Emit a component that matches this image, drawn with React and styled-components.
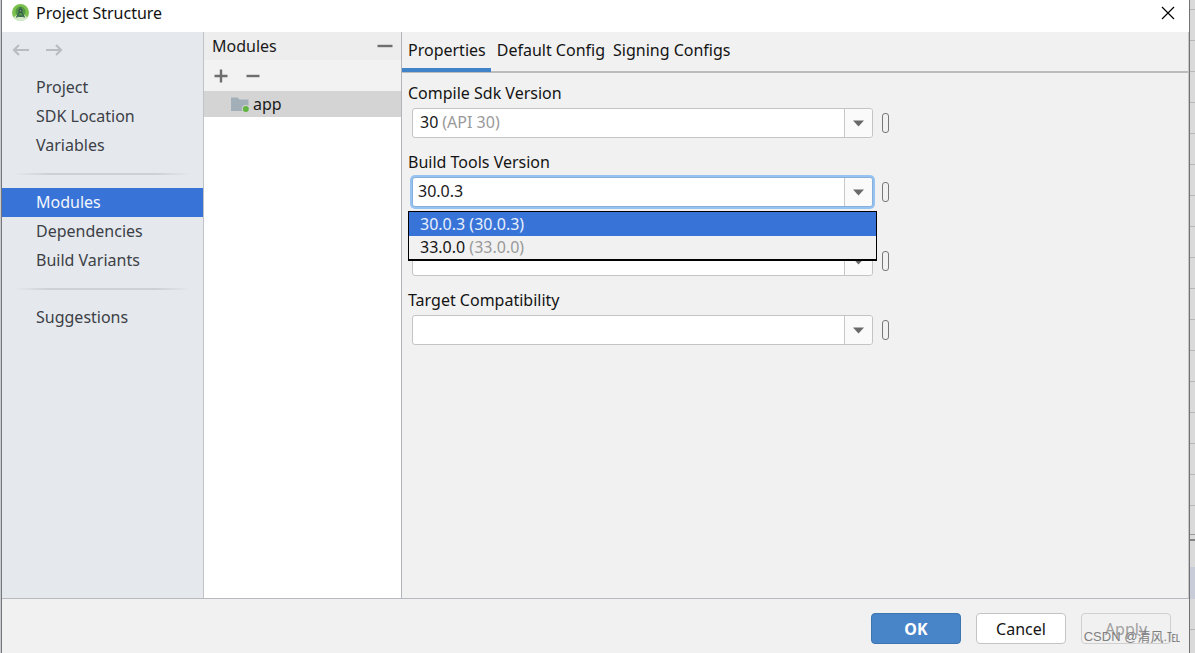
import React from "react";
import styled, { createGlobalStyle } from "styled-components";

const GlobalStyle = createGlobalStyle`
  *, *::before, *::after { box-sizing: border-box; }
  body {
    margin: 0;
    background: #dcdcdc;
    color: #1a1a1a;
    font: 16px/20px "Noto Sans", "Noto Sans CJK SC", sans-serif;
  }
  button, input { font: inherit; color: inherit; }
  button { margin: 0; padding: 0; border: 0; background: none; }
  ul { margin: 0; padding: 0; list-style: none; }
  a { color: inherit; text-decoration: none; }
`;

const Desktop = styled.div`
  display: flex;
  min-height: 100vh;
`;

const LeftEdge = styled.div`
  flex: 0 0 2px;
  background: #c9cbce;
  border-right: 1px solid #73777c;
`;

const RightEdge = styled.div`
  flex: 0 0 6px;
  display: flex;
  flex-direction: column;
  border-left: 1px solid #707274;
  background: repeating-linear-gradient(#dadada 0 9px, #b8b8b8 9px 10px, #dadada 10px 31px);
`;

const EdgeRule = styled.div`
  height: 7px;
  margin-top: 534px;
  border-top: 1px solid #999;
  border-bottom: 2px solid #858585;
  background: #dadada;
`;

const EdgeTint = styled.div`
  height: 32px;
  margin-top: 26px;
  background: #c8ccd8;
`;

const Dialog = styled.main`
  flex: 1;
  min-width: 0;
  display: flex;
  flex-direction: column;
  background: #f1f1f1;
`;

const TitleBar = styled.header`
  display: flex;
  align-items: center;
  height: 32px;
  padding: 0 12px 6px 8px;
  gap: 6px;
  background: #fff;
  color: #111;
`;

const Title = styled.h1`
  flex: 1;
  margin: 0;
  font-size: 16px;
  font-weight: 400;
`;

const IconButton = styled.button`
  display: inline-flex;
  align-items: center;
  justify-content: center;
  width: 18px;
  height: 18px;
  color: #6e6e6e;
`;

const Body = styled.div`
  flex: 1;
  display: flex;
  min-height: 0;
`;

const Sidebar = styled.nav`
  flex: 0 0 202px;
  background: #e5e9ee;
  border-right: 1px solid #bfc2c6;
`;

const History = styled.div`
  display: flex;
  align-items: center;
  gap: 15px;
  height: 36px;
  margin-bottom: 5px;
  padding-left: 10px;
`;

const NavLink = styled.a`
  display: block;
  padding: 0 34px;
  line-height: 29px;
  color: ${(p) => (p.$active ? "#f3f6fc" : "#3c4046")};
  background: ${(p) => (p.$active ? "#3874d8" : "transparent")};
`;

const NavDivider = styled.hr`
  height: 2px;
  margin: 13px 12px;
  border: 0;
  background: linear-gradient(90deg, transparent, #cdd0d4 20%, #cdd0d4 80%, transparent);
`;

const ModulesPanel = styled.section`
  flex: 0 0 197px;
  background: #fff;
`;

const PanelHeader = styled.div`
  display: flex;
  align-items: center;
  justify-content: space-between;
  height: 28px;
  padding: 0 7px 0 8px;
  background: #ededed;
`;

const PanelTitle = styled.h2`
  margin: 0;
  font-size: 16px;
  font-weight: 400;
`;

const PanelTools = styled.div`
  display: flex;
  align-items: center;
  gap: 14px;
  height: 31px;
  padding-left: 8px;
  background: #f2f2f2;
`;

const ModuleRow = styled.li`
  display: flex;
  align-items: center;
  gap: 4px;
  height: 26px;
  padding-left: 27px;
  background: #d4d4d4;
`;

const Details = styled.section`
  flex: 1;
  min-width: 0;
  border-left: 1px solid #b0b3b7;
  border-right: 1px solid #c9c9c9;
  background: #f1f1f1;
`;

const TabList = styled.div`
  display: flex;
  height: 41px;
  border-bottom: 2px solid #bcbcbc;
`;

const Tab = styled.button`
  height: 40px;
  padding: ${(p) => (p.$active ? "0 5px 0 6px" : "0 2px 0 6px")};
  color: #141414;
  border-bottom: 4px solid ${(p) => (p.$active ? "#4083c9" : "transparent")};
`;

const Form = styled.form`
  display: grid;
  gap: 11px;
  padding: 7px 6px;
`;

const Label = styled.label`
  display: block;
  height: 28px;
  line-height: 27px;
  color: #141414;
`;

const FieldBlock = styled.div`
  padding-top: ${(p) => (p.$unlabelled ? 28 : 0)}px;
`;

const FieldRow = styled.div`
  display: flex;
  align-items: center;
  gap: 9px;
  padding-left: 4px;
`;

const Combo = styled.div`
  position: relative;
  flex: 0 1 461px;
  display: flex;
  height: 30px;
  padding-left: ${(p) => (p.$focused ? 5 : 7)}px;
  border: 1px solid ${(p) => (p.$focused ? "#87afda" : "#c4c4c4")};
  border-radius: 3px;
  background: #fff;
  box-shadow: ${(p) => (p.$focused ? "0 0 0 2px #97c3f3" : "none")};
`;

const ComboInput = styled.input`
  flex: ${(p) => (p.$fit ? "none" : 1)};
  field-sizing: ${(p) => (p.$fit ? "content" : "fixed")};
  min-width: 0;
  padding: 0 0 2px;
  border: 0;
  outline: 0;
  background: transparent;
`;

const ComboHint = styled.span`
  flex: 1;
  padding-left: 4px;
  line-height: 26px;
  color: #999;
`;

const ComboArrow = styled.button`
  display: flex;
  align-items: center;
  justify-content: center;
  width: 28px;
  border-left: 1px solid #c8c8c8;
  border-radius: 0 3px 3px 0;
  background: #fafafa;
`;

const VariableButton = styled.button`
  width: 7px;
  height: 20px;
  border: 1px solid #777;
  border-radius: 3px;
`;

const Popup = styled.ul`
  position: absolute;
  z-index: 2;
  top: 33px;
  left: -5px;
  right: -5px;
  padding-bottom: 1px;
  border: solid #000;
  border-width: 1px 1px 2px;
  background: #f1f1f1;
`;

const Option = styled.li`
  padding: 0 11px;
  line-height: ${(p) => (p.$selected ? 24 : 22)}px;
  color: ${(p) => (p.$selected ? "#e8f0fd" : "#141414")};
  background: ${(p) => (p.$selected ? "#3874d8" : "transparent")};
`;

const OptionHint = styled.span`
  color: ${(p) => (p.$selected ? "inherit" : "#999")};
`;

const Footer = styled.footer`
  position: relative;
  display: flex;
  justify-content: flex-end;
  gap: 15px;
  height: 55px;
  padding: 14px 18px 0 0;
  border-top: 1px solid #b7b9be;
`;

const ActionButton = styled.button`
  width: 90px;
  height: 31px;
  border: 1px solid ${(p) => (p.$primary ? "#3d75b1" : "#c4c4c4")};
  border-radius: 4px;
  background: ${(p) => (p.$primary ? "#4884c8" : "#fff")};
  color: ${(p) => (p.$primary ? "#fff" : "#141414")};
  font-weight: ${(p) => (p.$primary ? 700 : 400)};
  &:disabled {
    background: transparent;
    border-color: #d0d0d0;
    color: #a0a0a0;
  }
`;

const Watermark = styled.span`
  position: absolute;
  right: 9px;
  bottom: 6px;
  font: 13px/20px "Liberation Sans", "Noto Sans CJK SC", sans-serif;
  color: #808080;
  white-space: nowrap;
  pointer-events: none;
`;

const StudioIcon = () => (
  <svg width="20" height="20" viewBox="0 0 20 20" aria-hidden="true">
    <circle cx="10.500" cy="9.500" r="8.500" fill="#7cc14e" />
    <path d="M3.500 14.500 A8.500 8.500 0 0 0 17.500 14.500 L14 11.500 H7 Z" fill="#d4e9c8" />
    <circle cx="10.500" cy="8.500" r="5" fill="#549a45" />
    <path d="M10.500 4 V8 M9.500 9 L6.500 14.500 M11.500 9 L14.500 14.500 M7.500 12.500 Q10.500 14 13.500 12.500" fill="none" stroke="#3b6a4d" strokeWidth="1.500" />
    <circle cx="10.500" cy="7.800" r="2.200" fill="#36584a" />
    <circle cx="10.500" cy="7.800" r="0.800" fill="#86b878" />
  </svg>
);

const CloseIcon = () => (
  <svg width="14" height="14" viewBox="0 0 14 14" stroke="#000" strokeWidth="1.200" aria-hidden="true">
    <path d="M1 1 L13 13 M13 1 L1 13" />
  </svg>
);

const ArrowIcon = ({ right }) => (
  <svg width="18" height="14" viewBox="0 0 18 14" fill="none" stroke="#b9bcc0" strokeWidth="2.200" aria-hidden="true">
    <path d={right ? "M1 7 H16 M11 2 L16 7 L11 12" : "M17 7 H2 M7 2 L2 7 L7 12"} />
  </svg>
);

const LineIcon = ({ plus, size = 14 }) => (
  <svg width={size} height="14" viewBox={`0 0 ${size} 14`} stroke="currentColor" strokeWidth="2.400" aria-hidden="true">
    <path d={`M0.500 7 H${size - 0.5}${plus ? " M7 0.500 V13.500" : ""}`} />
  </svg>
);

const FolderIcon = () => (
  <svg width="18" height="16" viewBox="0 0 18 16" aria-hidden="true">
    <path d="M0 1.500 H6.500 L8.500 3.500 H17.500 V15 H0 Z" fill="#a3afb8" />
    <circle cx="14.800" cy="13" r="4" fill="#d4d4d4" />
    <circle cx="14.800" cy="13" r="3" fill="#62b543" />
  </svg>
);

const TriangleIcon = () => (
  <svg width="11" height="7" viewBox="0 0 11 7" aria-hidden="true">
    <path d="M0 0.500 H11 L5.500 6.500 Z" fill="#696969" />
  </svg>
);

const navGroups = [
  ["Project", "SDK Location", "Variables"],
  ["Modules", "Dependencies", "Build Variants"],
  ["Suggestions"],
];

const tabs = ["Properties", "Default Config", "Signing Configs"];

const fields = [
  { id: "compile-sdk", label: "Compile Sdk Version", value: "30", hint: "(API 30)" },
  { id: "build-tools", label: "Build Tools Version", value: "30.0.3", options: ["30.0.3", "33.0.0"] },
  { id: "source-compat", name: "Source Compatibility", value: "" },
  { id: "target-compat", label: "Target Compatibility", value: "" },
];

function ComboField({ id, label, name = label, value, hint, options }) {
  return (
    <FieldBlock $unlabelled={!label}>
      {label && <Label htmlFor={id}>{label}</Label>}
      <FieldRow>
        <Combo $focused={Boolean(options)}>
          <ComboInput
            id={id}
            role="combobox"
            aria-label={label ? undefined : name}
            aria-expanded={Boolean(options)}
            defaultValue={value}
            $fit={Boolean(hint)}
          />
          {hint && <ComboHint>{hint}</ComboHint>}
          <ComboArrow type="button" aria-label={`Show ${name} options`}>
            <TriangleIcon />
          </ComboArrow>
          {options && (
            <Popup role="listbox" aria-label={name}>
              {options.map((o) => (
                <Option key={o} role="option" aria-selected={o === value} $selected={o === value}>
                  {o} <OptionHint $selected={o === value}>({o})</OptionHint>
                </Option>
              ))}
            </Popup>
          )}
        </Combo>
        <VariableButton type="button" aria-label={`Bind ${name} to a variable`} />
      </FieldRow>
    </FieldBlock>
  );
}

export default function App() {
  return (
    <>
      <GlobalStyle />
      <Desktop>
        <LeftEdge />
        <Dialog>
          <TitleBar>
            <StudioIcon />
            <Title>Project Structure</Title>
            <IconButton aria-label="Close"><CloseIcon /></IconButton>
          </TitleBar>
          <Body>
            <Sidebar>
              <History>
                <IconButton aria-label="Back"><ArrowIcon /></IconButton>
                <IconButton aria-label="Forward"><ArrowIcon right /></IconButton>
              </History>
              {navGroups.map((group, i) => (
                <React.Fragment key={group[0]}>
                  {i > 0 && <NavDivider />}
                  {group.map((name) => (
                    <NavLink key={name} href="#" $active={name === "Modules"}>{name}</NavLink>
                  ))}
                </React.Fragment>
              ))}
            </Sidebar>
            <ModulesPanel>
              <PanelHeader>
                <PanelTitle>Modules</PanelTitle>
                <IconButton aria-label="Hide modules"><LineIcon size={16} /></IconButton>
              </PanelHeader>
              <PanelTools>
                <IconButton aria-label="Add module"><LineIcon plus /></IconButton>
                <IconButton aria-label="Remove module"><LineIcon /></IconButton>
              </PanelTools>
              <ul>
                <ModuleRow><FolderIcon />app</ModuleRow>
              </ul>
            </ModulesPanel>
            <Details>
              <TabList role="tablist">
                {tabs.map((name, i) => (
                  <Tab key={name} role="tab" aria-selected={i === 0} $active={i === 0}>{name}</Tab>
                ))}
              </TabList>
              <Form>
                {fields.map((f) => <ComboField key={f.id} {...f} />)}
              </Form>
            </Details>
          </Body>
          <Footer>
            <ActionButton $primary>OK</ActionButton>
            <ActionButton>Cancel</ActionButton>
            <ActionButton disabled>Apply</ActionButton>
            <Watermark>CSDN @清风.℡</Watermark>
          </Footer>
        </Dialog>
        <RightEdge>
          <EdgeRule />
          <EdgeTint />
        </RightEdge>
      </Desktop>
    </>
  );
}
